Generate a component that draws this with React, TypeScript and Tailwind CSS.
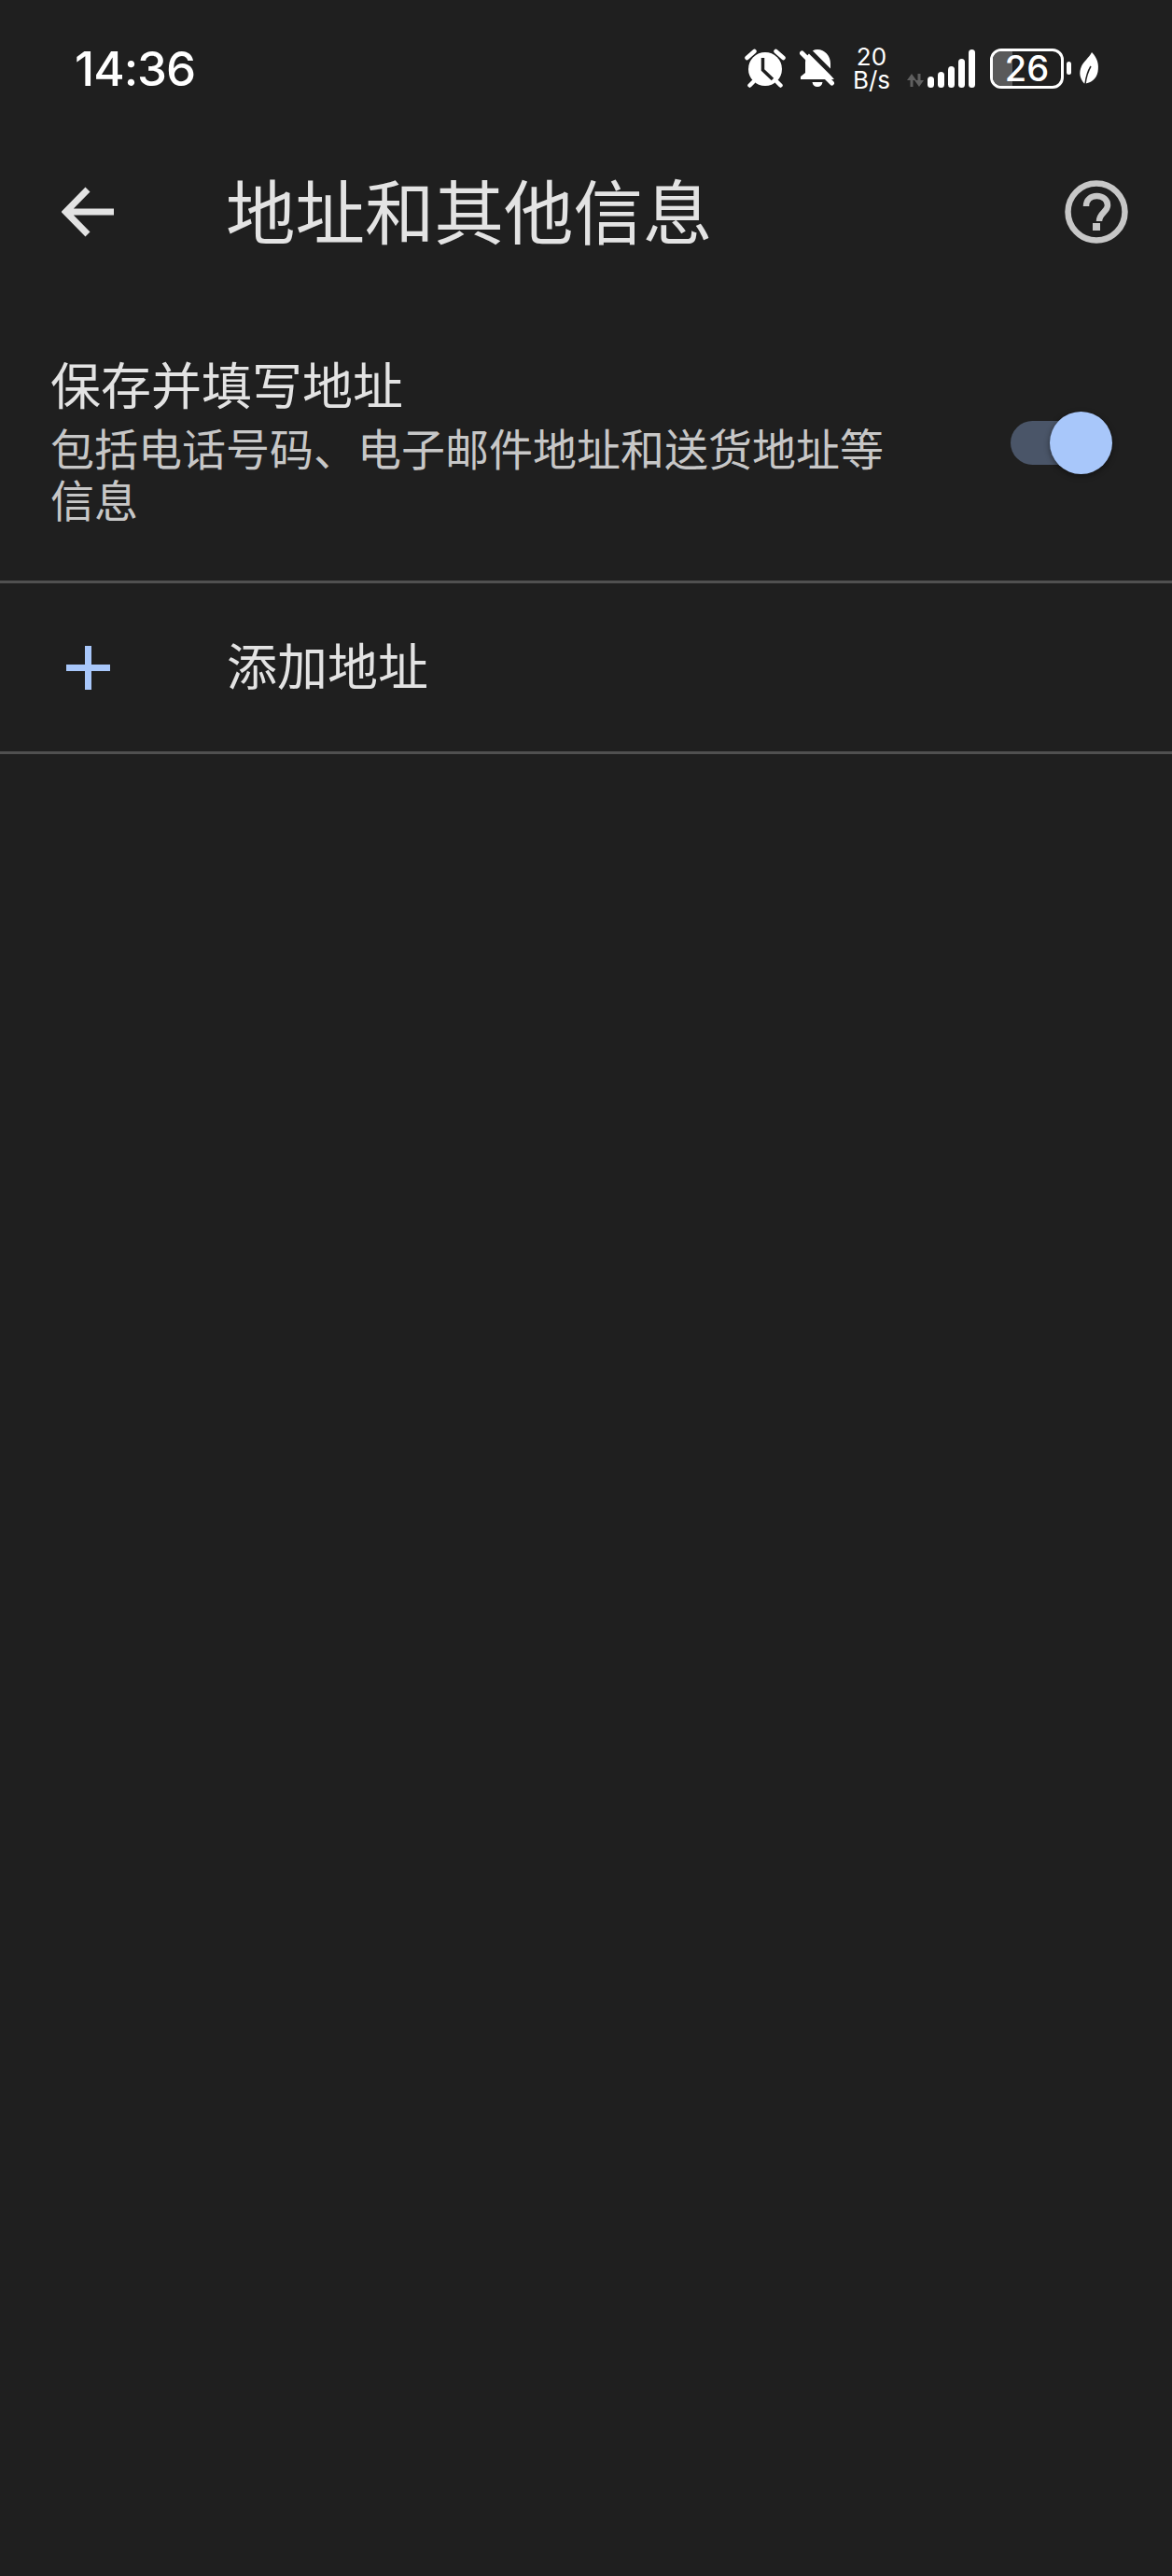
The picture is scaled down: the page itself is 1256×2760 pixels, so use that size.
const cjk = "font-['Noto_Sans_CJK_SC','Noto_Sans',sans-serif]";

function AlarmIcon() {
  return (
    <svg width="44" height="42" viewBox="0 0 44 42" className="shrink-0">
      <circle cx="22" cy="22" r="18" fill="#fff" />
      <path d="M2.5 10 L10.5 3 M41.5 10 L33.5 3" stroke="#fff" strokeWidth="4.5" strokeLinecap="round" />
      <path d="M9 36 L5.5 39.5 M35 36 L38.5 39.5" stroke="#fff" strokeWidth="4.5" strokeLinecap="round" />
      <path d="M19.5 10 V23 L30 33" fill="none" stroke="#1f1f1f" strokeWidth="3.5" />
    </svg>
  );
}

function BellOffIcon() {
  return (
    <svg width="38" height="42" viewBox="0 0 38 42" className="shrink-0">
      <path d="M19 1 C27 1 33 8 33 16 V28 L37 33 H1 V30 L6 26 V15 C6 8 12 1 19 1 Z" fill="#fff" />
      <path d="M13.5 36 H24.5 C24 39.5 22 41 19 41 C16 41 14 39.5 13.5 36 Z" fill="#fff" />
      <path d="M6 -2 L41 33" stroke="#1f1f1f" strokeWidth="5" />
      <path d="M2.5 5 L34.5 37" stroke="#fff" strokeWidth="5" strokeLinecap="round" />
    </svg>
  );
}

function SignalIcon() {
  return (
    <svg width="74" height="42" viewBox="0 0 74 42" className="shrink-0">
      <path d="M5 27 L0 34 H3.5 V41 H6.5 V34 H10 Z" fill="#5f5f5f" />
      <path d="M13 41 L8 34 H11.5 V27 H14.5 V34 H18 Z" fill="#5f5f5f" />
      <rect x="22" y="30" width="7" height="12" rx="3.5" fill="#fff" />
      <rect x="33" y="25" width="7" height="17" rx="3.5" fill="#fff" />
      <rect x="44" y="19" width="7" height="23" rx="3.5" fill="#fff" />
      <rect x="55" y="11" width="7" height="31" rx="3.5" fill="#fff" />
      <rect x="66" y="1" width="7" height="41" rx="3.5" fill="#fff" />
    </svg>
  );
}

function LeafIcon() {
  return (
    <svg width="22" height="34" viewBox="0 0 22 34" className="shrink-0">
      <path d="M14 0 C20 6 22 13 20.5 21 C19 29 13 33 6 33.5 C1 28 0 22 3 15 C5 10 11 6 14 0 Z" fill="#fff" />
      <path d="M7 34 C8 26 10 20 13 15" fill="none" stroke="#1f1f1f" strokeWidth="1.5" />
    </svg>
  );
}

function StatusBar() {
  return (
    <div className="flex h-[144px] items-center justify-between pl-[80px] pr-[78px] pt-[2px]">
      <span className="font-['Inter',sans-serif] text-[51px] font-medium leading-none tracking-[-1px] text-white">
        14:36
      </span>
      <div className="flex items-center">
        <AlarmIcon />
        <div className="ml-[15px]">
          <BellOffIcon />
        </div>
        <div className="ml-[18px] flex w-[42px] flex-col items-center font-['Inter',sans-serif] text-[26px] leading-[25px] text-white">
          <span>20</span>
          <span>B/s</span>
        </div>
        <div className="ml-[17px]">
          <SignalIcon />
        </div>
        <div className="relative ml-[15px] flex h-[43px] w-[79px] items-center justify-center rounded-[12px] border-[3px] border-white">
          <div className="absolute inset-y-0 left-0 w-[21px] rounded-l-[9px] bg-[#5a5a5a]" />
          <span className="relative font-['Inter',sans-serif] text-[38px] font-medium leading-[37px] text-white">26</span>
        </div>
        <div className="ml-[3px] h-[14px] w-[5px] rounded-full bg-white" />
        <div className="ml-[8px]">
          <LeafIcon />
        </div>
      </div>
    </div>
  );
}

export default function App() {
  return (
    <div className={`flex min-h-[2760px] flex-col bg-[#1f1f1f] ${cjk}`}>
      <StatusBar />

      <div className="flex h-[166px] items-center pl-[66px] pr-[47px]">
        <svg width="58" height="54" viewBox="0 0 58 54" className="shrink-0">
          <path d="M56 27 H6 M28 3 L4.5 27 L28 51" fill="none" stroke="#e3e3e3" strokeWidth="7" />
        </svg>
        <h1 className="mb-[6px] ml-[118px] text-[74.5px] font-normal leading-none text-[#e3e3e3]">地址和其他信息</h1>
        <svg width="68" height="68" viewBox="0 0 68 68" className="ml-auto shrink-0">
          <circle cx="34" cy="34" r="30.5" fill="none" stroke="#c7c7c7" strokeWidth="6.5" />
          <path d="M23 28 C23 21 28 17 34.5 17 C41 17 46 21 46 27 C46 34 37 35 37 44" fill="none" stroke="#c7c7c7" strokeWidth="6.5" />
          <rect x="30" y="46" width="8" height="8" fill="#c7c7c7" />
        </svg>
      </div>

      <div className="flex items-center justify-between pb-[61px] pl-[54px] pr-[77px] pt-[71px]">
        <div className="w-[920px]">
          <div className="text-[54px] leading-[60px] text-[#e3e3e3]">保存并填写地址</div>
          <div className="mt-[10px] text-[47px] leading-[55px] text-[#c7c7c7]">包括电话号码、电子邮件地址和送货地址等信息</div>
        </div>
        <div className="relative mt-[7px] h-[47px] w-[96px] shrink-0 rounded-full bg-[#4a5568]">
          <div className="absolute right-[-13px] top-[-10px] h-[67px] w-[67px] rounded-full bg-[#a8c7fa] shadow-[0_2px_6px_rgba(0,0,0,0.45)]" />
        </div>
      </div>

      <div className="h-[3px] bg-[#505050]" />

      <div className="flex h-[180px] items-center pl-[71px]">
        <svg width="47" height="47" viewBox="0 0 47 47" className="shrink-0">
          <path d="M23.5 0 V47 M0 23.5 H47" stroke="#a8c7fa" strokeWidth="7" />
        </svg>
        <span className="mb-[6px] ml-[125px] text-[54px] leading-none text-[#e3e3e3]">添加地址</span>
      </div>

      <div className="h-[3px] bg-[#505050]" />
    </div>
  );
}
